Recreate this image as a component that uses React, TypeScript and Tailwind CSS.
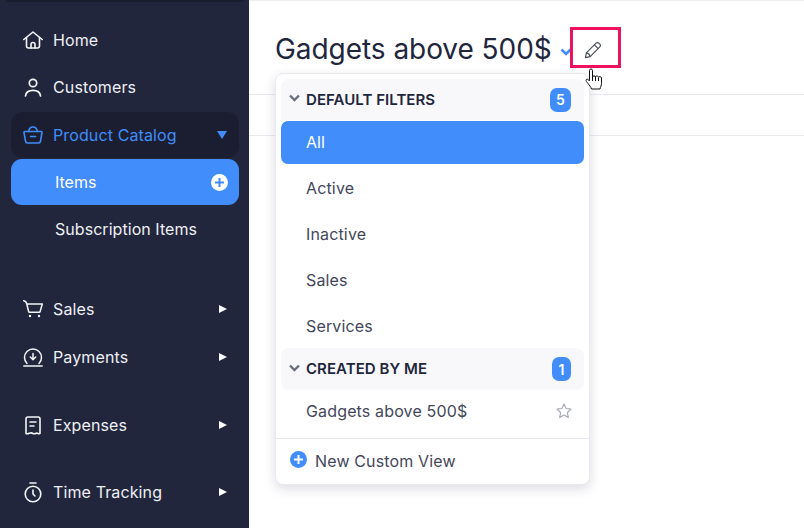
function Home() {
  return (
    <svg width="20" height="18" viewBox="0 0 20 18" fill="none" stroke="currentColor" strokeWidth="1.6" strokeLinejoin="round" strokeLinecap="round">
      <path d="M.8 8.500 10 1l9.200 7.500" />
      <path d="M3.500 6.500V15a2 2 0 0 0 2 2h9a2 2 0 0 0 2-2V6.500" />
      <path d="M8 17v-3.500a2 2 0 0 1 4 0V17" />
    </svg>
  );
}

function User() {
  return (
    <svg width="18" height="19" viewBox="0 0 18 19" fill="none" stroke="currentColor" strokeWidth="1.7" strokeLinecap="round">
      <circle cx="9" cy="5" r="3.700" />
      <path d="M1.500 18c.4-3.600 3.600-5.600 7.500-5.600s7.100 2 7.500 5.600" />
    </svg>
  );
}

function Basket() {
  return (
    <svg width="20" height="18" viewBox="0 0 20 18" fill="none" stroke="currentColor" strokeWidth="1.6" strokeLinecap="round" strokeLinejoin="round">
      <path d="M5.500 5.500C6 3 7.500 1 10 1s4 2 4.500 4.500" />
      <path d="M2 5.500h16a1 1 0 0 1 1 1.200l-1.500 8.500a2 2 0 0 1-2 1.800h-11a2 2 0 0 1-2-1.800L1 6.700a1 1 0 0 1 1-1.200z" />
      <path d="M7.500 10.500h5" />
    </svg>
  );
}

function Cart() {
  return (
    <svg width="20" height="18" viewBox="0 0 20 18" fill="none" stroke="currentColor" strokeWidth="1.5" strokeLinecap="round" strokeLinejoin="round">
      <path d="M.7.700c1.700.3 2.500 1 2.900 2.500l2 8.300c.1.500.5.800 1 .8h9.500c.5 0 .9-.3 1-.8L19.300 4H4" />
      <circle cx="7" cy="16" r="1.200" fill="currentColor" stroke="none" />
      <circle cx="16" cy="16" r="1.200" fill="currentColor" stroke="none" />
    </svg>
  );
}

function Payment() {
  return (
    <svg width="20" height="19" viewBox="0 0 20 19" fill="none" stroke="currentColor" strokeWidth="1.5" strokeLinecap="round" strokeLinejoin="round">
      <path d="M4 15.500a8.500 8.500 0 1 1 12 0" />
      <path d="M.8 18h18.400" />
      <path d="M10 5.500v6M7.300 9l2.700 2.700L12.700 9" />
    </svg>
  );
}

function Receipt() {
  return (
    <svg width="16" height="19" viewBox="0 0 16 19" fill="none" stroke="currentColor" strokeWidth="1.600" strokeLinecap="round" strokeLinejoin="round">
      <path d="M1 17.500V3a2 2 0 0 1 2-2h10a2 2 0 0 1 2 2v14.500c-1.200 1-2.300-.8-3.500-.3-1.200.5-2.300 1-3.500.3-1.200-.7-2.300-.8-3.500-.3-1.200.5-2.300 1-3.500.3z" />
      <path d="M5 6h6M5 10h4" />
    </svg>
  );
}

function Timer() {
  return (
    <svg width="18" height="21" viewBox="0 0 18 21" fill="none" stroke="currentColor" strokeWidth="1.600" strokeLinecap="round" strokeLinejoin="round">
      <path d="M6 1h6" />
      <circle cx="9" cy="12" r="7.800" />
      <path d="M9 8v4l2 2" />
    </svg>
  );
}

function Caret() {
  return (
    <svg width="8" height="10" viewBox="0 0 8 10" fill="#ffffff">
      <path d="M0 1v8l8-4z" />
    </svg>
  );
}

function Chevron({ color, w = 11, sw = 2.4 }: { color: string; w?: number; sw?: number }) {
  return (
    <svg width={w} height="8" viewBox="0 0 11 8" fill="none" stroke={color} strokeWidth={sw}>
      <path d="M1 1.500l4.500 4.500L10 1.500" />
    </svg>
  );
}

function Row({ icon, label, y, caret = true }: { icon: React.ReactNode; label: string; y: string; caret?: boolean }) {
  return (
    <div className={`flex items-center h-[46px] pl-3 pr-3 ${y}`}>
      <span className="w-[20px] flex justify-center text-[#f4f5f8] shrink-0">{icon}</span>
      <span className="ml-[10px] text-[#eef0f5] text-[16px] tracking-[0.12px] flex-1">{label}</span>
      {caret && <Caret />}
    </div>
  );
}

export default function App() {
  return (
    <div className="w-[804px] h-[528px] flex overflow-hidden relative bg-white font-['Inter',sans-serif]">
      {/* sidebar */}
      <div className="w-[249px] h-full bg-[#22263c] shrink-0 pl-[11px] pr-[10px] relative">
        <div className="h-[2px] mx-[-5px] bg-[#1a1d2e] rounded-b" />
        <Row icon={<Home />} label="Home" y="mt-[15px]" caret={false} />
        <Row icon={<User />} label="Customers" y="mt-[1px]" caret={false} />
        <div className="flex items-center h-[46px] mt-[2px] pl-3 pr-3 bg-[#1b1e30] rounded-[12px]">
          <span className="w-[20px] flex justify-center text-[#408dfb] shrink-0"><Basket /></span>
          <span className="ml-[10px] text-[#408dfb] text-[16px] tracking-[0.12px] flex-1">Product Catalog</span>
          <svg width="10" height="8" viewBox="0 0 10 8" fill="#408dfb">
            <path d="M0 0h10L5 8z" />
          </svg>
        </div>
        <div className="flex items-center h-[46px] mt-[1px] pl-[44px] bg-[#408dfb] rounded-[11px]">
          <span className="text-white text-[16px] flex-1">Items</span>
          <span className="w-[17px] h-[17px] mr-[11px] rounded-full bg-white flex items-center justify-center">
            <svg width="9" height="9" viewBox="0 0 9 9" stroke="#408dfb" strokeWidth="2"><path d="M4.500 0v9M0 4.500h9" /></svg>
          </span>
        </div>
        <div className="flex items-center h-[46px] mt-[1px] pl-[44px]">
          <span className="text-[#eef0f5] text-[16px] tracking-[0.05px]">Subscription Items</span>
        </div>
        <Row icon={<Cart />} label="Sales" y="mt-[34px]" />
        <Row icon={<Payment />} label="Payments" y="mt-[2px]" />
        <Row icon={<Receipt />} label="Expenses" y="mt-[22px]" />
        <Row icon={<Timer />} label="Time Tracking" y="mt-[21px]" />
      </div>

      {/* main */}
      <div className="flex-1 border-t border-[#eeeef3] h-full">
        <div className="h-[94px] border-b border-[#e9e9f0] pl-[26px] pt-[29px] flex items-start">
          <span className="text-[#21263c] text-[28px] leading-[38px] tracking-[-0.05px]">Gadgets above 500$</span>
          <span className="ml-[8px] mt-[18px]"><Chevron color="#408dfb" w={12} sw={2.6} /></span>
        </div>
        <div className="h-[41px] border-b border-[#e9e9f0]" />
      </div>

      {/* red highlight over the edit button */}
      <div className="absolute left-[570px] top-[27px] w-[51px] h-[41px] border-[3px] border-[#f0125e] bg-white flex items-center justify-center pr-[5px] pt-[5px]">
        <svg width="18" height="18" viewBox="0 0 19 19" fill="none" stroke="#4a4d5a" strokeWidth="1.200" strokeLinejoin="round">
          <path d="M1.500 17.500l1-5L12.700 2.300a2.100 2.100 0 0 1 3 0l1 1a2.100 2.100 0 0 1 0 3L6.500 16.500z" />
          <path d="M2.500 12.500c1.800.3 3.600 2 4 4M11 4l4 4" />
        </svg>
      </div>

      {/* dropdown */}
      <div className="absolute left-[275px] top-[73px] w-[315px] h-[412px] bg-white rounded-[8px] border border-[#e9e9f0] shadow-[0_4px_12px_rgba(40,40,80,0.16)] pt-[5px] px-[5px]">
        <div className="h-[41px] rounded-t-[8px] bg-[#f8f8fb] flex items-center pl-[8px] pr-[13px]">
          <span className="mt-[-3px]"><Chevron color="#6c6f7d" /></span>
          <span className="ml-[6px] mt-[1px] text-[#21263c] text-[15px] tracking-[0.05px] font-semibold flex-1">DEFAULT FILTERS</span>
          <span className="w-[21px] h-[24px] rounded-[7px] bg-[#408dfb] text-white text-[14px] font-semibold flex items-center justify-center">5</span>
        </div>
        <div className="h-[43px] mt-[1px] pb-[2px] rounded-[7px] bg-[#408dfb] text-white text-[16px] flex items-center pl-[25px]">All</div>
        <div className="mt-[1px]">
          {["Active", "Inactive", "Sales", "Services"].map((t) => (
            <div key={t} className="h-[46px] text-[#44475a] text-[16px] tracking-[0.15px] flex items-center pl-[25px]">{t}</div>
          ))}
        </div>
        <div className="h-[42px] mt-[-1px] rounded-[8px] bg-[#f8f8fb] flex items-center pl-[8px] pr-[13px]">
          <span className="mt-[-3px]"><Chevron color="#6c6f7d" /></span>
          <span className="ml-[6px] text-[#21263c] text-[15px] tracking-[0.05px] font-semibold flex-1">CREATED BY ME</span>
          <span className="w-[19px] h-[24px] rounded-[7px] bg-[#408dfb] text-white text-[14px] font-semibold flex items-center justify-center">1</span>
        </div>
        <div className="h-[43px] pb-[2px] flex items-center pl-[25px] pr-[12px] text-[#44475a] text-[16px] tracking-[0.15px]">
          <span className="flex-1">Gadgets above 500$</span>
          <svg width="16" height="16" viewBox="0 0 16 16" fill="none" stroke="#a5a7b2" strokeWidth="1.100" strokeLinejoin="round">
            <path d="M8 1l2.100 4.500 4.900.6-3.600 3.400.9 4.900L8 12l-4.300 2.400.9-4.900L1 6.100l4.900-.6z" />
          </svg>
        </div>
        <div className="h-px bg-[#e9e9f0] mx-[-5px] mt-[5px]" />
        <div className="h-[45px] pb-[2px] flex items-center pl-[9px] text-[#44475a] text-[16px] tracking-[0.15px]">
          <span className="w-[17px] h-[17px] rounded-full bg-[#408dfb] flex items-center justify-center mt-[-2px]">
            <svg width="9" height="9" viewBox="0 0 9 9" stroke="#ffffff" strokeWidth="2"><path d="M4.500 0v9M0 4.500h9" /></svg>
          </span>
          <span className="ml-[8px]">New Custom View</span>
        </div>
      </div>

      {/* hand cursor */}
      <svg className="absolute left-[585px] top-[68px]" width="18" height="23" viewBox="0 0 18 23" fill="#ffffff" stroke="#111111" strokeWidth="1" strokeLinejoin="round">
        <path d="M4.500 12.500V2.500a1.500 1.500 0 0 1 3 0V9c0-1.500 3-1.500 3 0 0-1.300 3-1.300 3 .3 0-1 3-1 3 .7v5.500c0 2-1 3-1.500 5.500H6.500c-.5-2-2-3.500-3.500-5.500-1-1.300-2.500-3-1.700-4 .8-1 2.200.2 3.200 1.500z" />
        <path d="M7.500 9v4M10.500 9v4M13.500 9.500V13" fill="none" />
      </svg>
    </div>
  );
}
